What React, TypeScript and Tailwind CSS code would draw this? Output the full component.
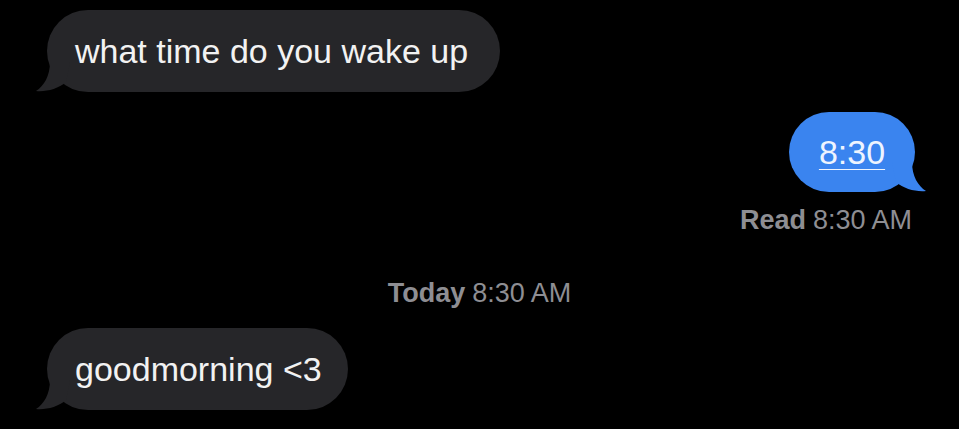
import React from "react";

function TailLeft({ color }: { color: string }) {
  return (
    <svg
      className="absolute bottom-0 left-[-11px]"
      width="34"
      height="30"
      viewBox="0 0 34 30"
      aria-hidden="true"
    >
      <path d="M14 0 C14 14 8 24 0 29 C10 30 22 27 30 20 L34 0 Z" fill={color} />
    </svg>
  );
}

function TailRight({ color }: { color: string }) {
  return (
    <svg
      className="absolute bottom-0 right-[-11px]"
      width="34"
      height="30"
      viewBox="0 0 34 30"
      aria-hidden="true"
    >
      <path d="M20 0 C20 14 26 24 34 29 C24 30 12 27 4 20 L0 0 Z" fill={color} />
    </svg>
  );
}

function Incoming({ text, width }: { text: string; width: string }) {
  return (
    <div className={`relative flex h-[82px] items-center rounded-[41px] bg-[#262629] pl-[28px] ${width}`}>
      <TailLeft color="#262629" />
      <span className="relative text-[34px] leading-[40px] text-[#f2f2f2]">{text}</span>
    </div>
  );
}

export default function App() {
  return (
    <div
      className="h-[429px] w-[959px] overflow-hidden bg-black"
      style={{ fontFamily: '"Liberation Sans", Arial, sans-serif' }}
    >
      <div className="flex flex-col pt-[10px]">
        <div className="pl-[47px]">
          <Incoming text="what time do you wake up" width="w-[453px]" />
        </div>

        <div className="mt-[20px] flex justify-end pr-[44px]">
          <div className="relative flex h-[80px] w-[126px] items-center justify-center rounded-[40px] bg-[#3a84ef]">
            <TailRight color="#3a84ef" />
            <span className="relative text-[34px] leading-[40px] text-[#eef4ff] underline decoration-1 underline-offset-[5px]">
              8:30
            </span>
          </div>
        </div>

        <div className="mt-[13px] flex justify-end pr-[47px] text-[27px] leading-[30px] text-[#8e8e93]">
          <span className="font-bold">Read</span>
          <span className="ml-[7px]">8:30 AM</span>
        </div>

        <div className="mt-[43px] flex justify-center text-[27px] leading-[30px] text-[#8e8e93]">
          <span className="font-bold">Today</span>
          <span className="ml-[7px]">8:30 AM</span>
        </div>

        <div className="mt-[20px] pl-[47px]">
          <Incoming text="goodmorning <3" width="w-[301px]" />
        </div>
      </div>
    </div>
  );
}
